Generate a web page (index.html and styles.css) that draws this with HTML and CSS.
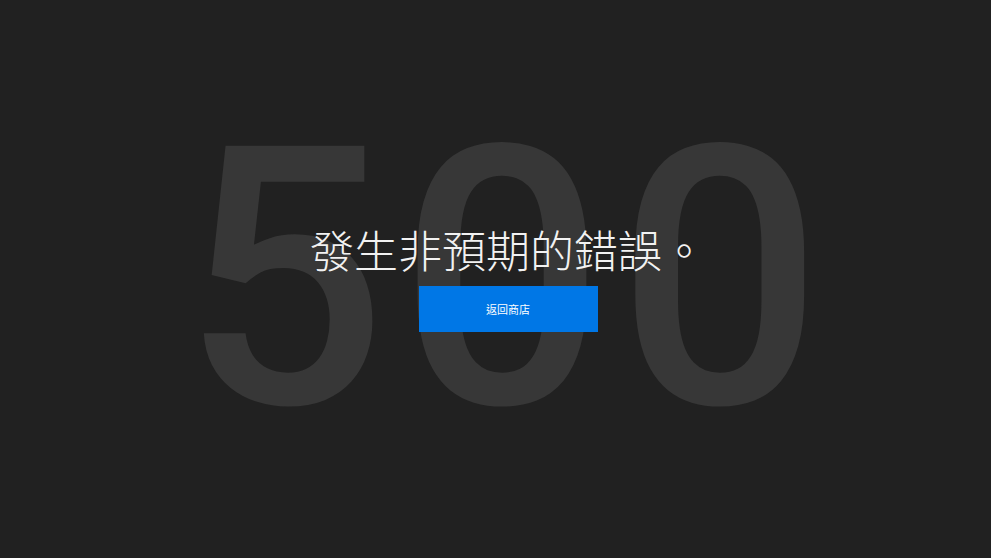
FILE: index.html
```html
<!DOCTYPE html>
<html lang="zh-Hant">
<head>
<meta charset="utf-8">
<title>500</title>
<link rel="stylesheet" href="styles.css">
</head>
<body>
<main class="page">
  <div class="stack">
    <div class="code" aria-hidden="true">500</div>
    <div class="content">
      <h1 class="title">發生非預期的錯誤。</h1>
      <a class="btn" href="#">返回商店</a>
    </div>
  </div>
</main>
</body>
</html>
```
FILE: styles.css
```css
html, body {
  margin: 0;
  padding: 0;
  height: 100%;
  background: #212121;
}
.page {
  box-sizing: border-box;
  height: 100vh;
  padding-left: 25px;
  display: grid;
  place-items: center;
}
.stack {
  display: grid;
  place-items: center;
}
.code, .content {
  grid-area: 1 / 1;
}
.code {
  font-family: Roboto, "Liberation Sans", sans-serif;
  font-weight: 500;
  font-size: 362px;
  line-height: 1;
  color: #373737;
  letter-spacing: 12px;
  user-select: none;
}
.content {
  display: flex;
  flex-direction: column;
  align-items: center;
  gap: 15px;
}
.title {
  margin: 0;
  font-family: "Noto Sans CJK TC", sans-serif;
  font-weight: 300;
  font-size: 44px;
  line-height: 44px;
  color: #f2f2f2;
}
.btn {
  display: flex;
  align-items: center;
  justify-content: center;
  width: 179px;
  height: 46px;
  background: #0077e6;
  color: #ffffff;
  font-family: "Noto Sans CJK TC", sans-serif;
  font-size: 11px;
  text-decoration: none;
}
```
